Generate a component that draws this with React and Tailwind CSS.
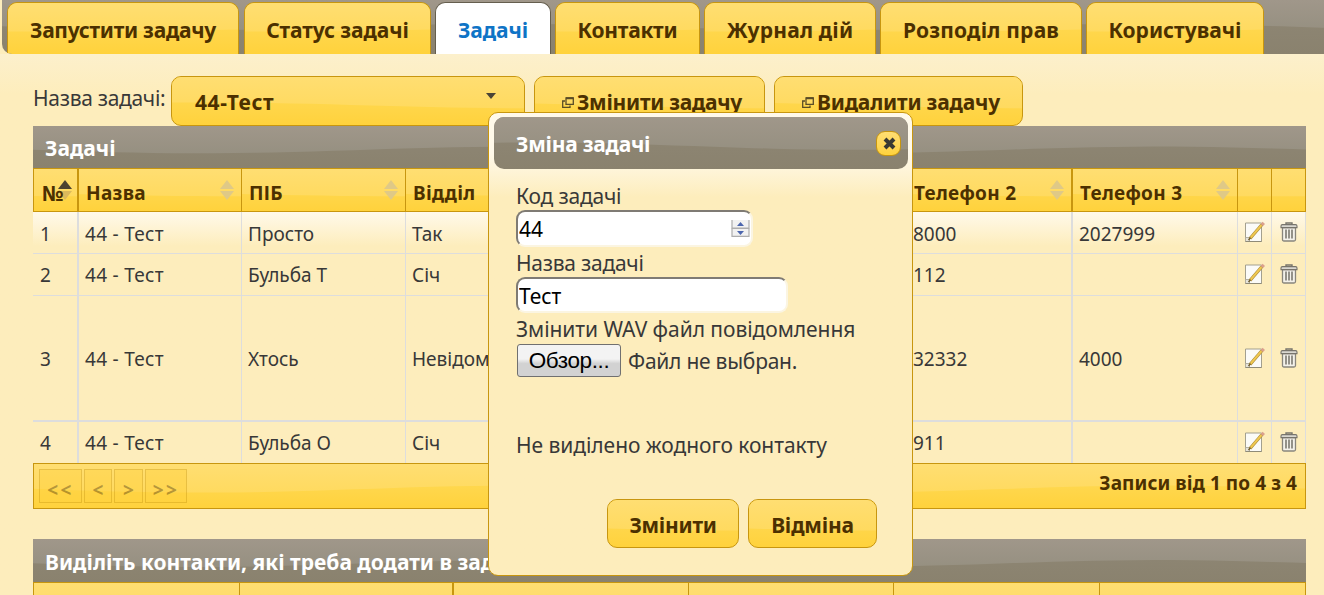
import { useState } from "react";
import clsx from "clsx";

const tabs = [
  { id: "run", label: "Запустити задачу", className: "w-[232px] tracking-[-0.28px]" },
  { id: "status", label: "Статус задачі", className: "w-[187px] tracking-[-0.1px]" },
  { id: "tasks", label: "Задачі", className: "w-[116px] tracking-[-0.1px]" },
  { id: "contacts", label: "Контакти", className: "w-[145px] tracking-[-0.25px]" },
  { id: "log", label: "Журнал дій", className: "w-[172px] tracking-[0.18px]" },
  { id: "rights", label: "Розподіл прав", className: "w-[202px] tracking-[0.19px]" },
  { id: "users", label: "Користувачі", className: "w-[178px]" },
];

const columns = [
  { label: "№", width: 45, sort: "asc", wide: true },
  { label: "Назва", width: 163, sort: "none" },
  { label: "ПІБ", width: 164, sort: "none" },
  { label: "Відділ", width: 164, sort: "none" },
  { label: "", width: 168, sort: "none" },
  { label: "", width: 169, sort: "none" },
  { label: "Телефон 2", width: 166, sort: "none", wide: true },
  { label: "Телефон 3", width: 165, sort: "none" },
  { label: "", width: 34 },
  { label: "", width: 34 },
];

const tasks = [
  { id: 1, task: "44 - Тест", name: "Просто", dept: "Так", phone2: "8000", phone3: "2027999", className: "h-[42px]", pad: "pt-[3px]" },
  { id: 2, task: "44 - Тест", name: "Бульба Т", dept: "Січ", phone2: "112", phone3: "", className: "h-[42px]", pad: "pt-px" },
  { id: 3, task: "44 - Тест", name: "Хтось", dept: "Невідомо", phone2: "32332", phone3: "4000", className: "h-[126px]", pad: "pt-[3px]" },
  { id: 4, task: "44 - Тест", name: "Бульба О", dept: "Січ", phone2: "911", phone3: "", className: "h-[41px]", pad: "pt-px" },
];

const GRID = "grid grid-cols-[45px_163px_164px_164px_168px_169px_166px_165px_34px_1fr]";

// glossy wave on top of the bar, level and amp are in percent of the bar height
function Gloss({ width, trough = 167, level = 55, amp = 8, tone = "gold" }) {
  const period = 640;
  const at = (x) => (level + amp * Math.cos(((x - trough) / period) * Math.PI * 2)).toFixed(2);
  let d = "M0 0";
  for (let x = 0; x < width; x += 20) {
    d += ` L${x} ${at(x)}`;
  }
  d += ` L${width} ${at(width)} L${width} 0Z`;
  return (
    <svg className="absolute inset-0 -z-10 h-full w-full" viewBox={`0 0 ${width} 100`} preserveAspectRatio="none">
      <defs>
        <linearGradient id="gloss-gold" x1="0" y1="0" x2="0" y2="1">
          <stop offset="0" stopColor="#ffde72" />
          <stop offset="1" stopColor="#ffda5f" />
        </linearGradient>
        <linearGradient id="gloss-gray" x1="0" y1="0" x2="0" y2="1">
          <stop offset="0" stopColor="#a0978a" />
          <stop offset="1" stopColor="#969081" />
        </linearGradient>
      </defs>
      <path d={d} fill={tone === "gold" ? "url(#gloss-gold)" : "url(#gloss-gray)"} />
    </svg>
  );
}

function Button({ children, width, className }) {
  return (
    <button
      type="button"
      className={clsx(
        "relative isolate flex shrink-0 items-center overflow-hidden rounded-[10px] border border-[#c8960f] bg-linear-to-b from-[#ffd74d] from-50% to-[#ffd23c] font-bold text-[#4c3000]",
        className
      )}
    >
      <Gloss width={width} trough={width} level={59} amp={6} />
      {children}
    </button>
  );
}

function SortIcon({ sort }) {
  return (
    <svg
      className={clsx("absolute top-[11px] h-[20px] w-[14px]", sort === "asc" ? "right-[5px] -z-[5]" : "right-[7px]")}
      viewBox="0 0 14 20"
    >
      <path d="M7 0 L14 9 H0Z" fill={sort === "asc" ? "#4d4330" : "#dfc987"} />
      <path d="M7 20 L14 11 H0Z" fill={sort === "asc" ? "#dcb95c" : "#dfc987"} />
    </svg>
  );
}

function WindowIcon() {
  return (
    <svg className="h-[11px] w-[12px] shrink-0" viewBox="0 0 12 11" fill="none" stroke="#5a4c26">
      <path d="M3 4 H0.7 V10.3 H8 V8.5" strokeWidth="1.3" />
      <path d="M4 1 H11.3 V7.3 H4Z" strokeWidth="1.3" />
      <path d="M4 1.2 H11.4" strokeWidth="2" />
    </svg>
  );
}

function EditIcon() {
  return (
    <svg className="h-[22px] w-[22px]" viewBox="0 0 22 22">
      <path d="M1.5 2 H17.5 V20.5 H5.5 L1.5 16.5Z" fill="#fbfbf8" stroke="#a3a08f" />
      <path d="M1.5 20.5 V16.5 H5.5 V20.5Z" fill="#e5e3da" stroke="#a3a08f" strokeWidth="0.8" />
      <path d="M1.5 20.5 H17.5" stroke="#8f8b78" />
      <path d="M6 17.5 L18 3.5" stroke="#a98a38" strokeWidth="3.2" />
      <path d="M6.5 16.8 L17.5 4" stroke="#f0c850" strokeWidth="2" />
      <path d="M17.8 4 L19.8 1.8" stroke="#dba08c" strokeWidth="3.2" />
      <path d="M4.5 19 L6.5 16.6" stroke="#6e5a2a" strokeWidth="1.4" />
    </svg>
  );
}

function TrashIcon() {
  return (
    <svg className="h-[20px] w-[18px]" viewBox="0 0 18 20" fill="none">
      <path d="M6 2.5 V1 H12 V2.5" stroke="#77746c" strokeWidth="1.4" />
      <path d="M2.5 5.5 H15.5 V17.5 Q15.5 19 14 19 H4 Q2.5 19 2.5 17.5Z" fill="#f3f1ea" stroke="#88857c" strokeWidth="1.3" />
      <path d="M1 4 Q1 2.6 2.5 2.6 H15.5 Q17 2.6 17 4 V5.6 H1Z" fill="#d9d7d0" stroke="#77746c" strokeWidth="1.1" />
      <path d="M6 7.5 V16.5 M9 7.5 V16.5 M12 7.5 V16.5" stroke="#74716a" strokeWidth="1.5" />
    </svg>
  );
}

function TitleBar({ children, className }) {
  return (
    <h2 className={clsx("relative isolate bg-linear-to-b from-[#8f8776] to-[#8a826e] pl-3 text-[21px] font-bold text-white", className)}>
      <Gloss width={1273} level={57} amp={8} tone="gray" />
      {children}
    </h2>
  );
}

function TaskTable() {
  return (
    <div>
      <TitleBar className="h-[42px] leading-[45px]">Задачі</TitleBar>
      <div className={clsx(GRID, "h-[44px] grid-rows-[42px] border-y border-l border-[#c8960f] text-[19px] font-bold tracking-[0.3px] text-[#4c3000]")}>
        {columns.map((col, i) => (
          <div
            key={i}
            className={clsx(
              "relative isolate h-[42px] border-[#c8960f] bg-linear-to-b from-[#ffd74d] from-50% to-[#ffd23c] pt-[5px] leading-[39px]",
              i === 0 ? "pl-2 text-[21px] tracking-normal" : "pl-[7px]",
              col.wide ? "border-r-2" : "border-r"
            )}
          >
            <Gloss width={col.width} trough={col.width} level={60} amp={5} />
            {col.label}
            {col.sort && <SortIcon sort={col.sort} />}
          </div>
        ))}
      </div>
      <div className="bg-linear-to-b from-[#fff9ea] to-[#fdedbc] to-[34px] text-[19px] text-[#383838]">
        {tasks.map((t) => {
          const cell = clsx("flex items-center border-r border-[#dddddd] pl-[6px]", t.pad);
          const iconCell = "flex items-center justify-center border-r border-[#dddddd]";
          return (
            <div
              key={t.id}
              className={clsx(GRID, "border-[#dddddd] pl-px", t.className, t.id === 3 && "border-b-2", t.id < 3 && "border-b")}
            >
              <span className={clsx(cell, "border-r-2")}>{t.id}</span>
              <span className={clsx(cell, "tracking-[0.3px]")}>{t.task}</span>
              <span className={cell}>{t.name}</span>
              <span className={cell}>{t.dept}</span>
              <span className={cell}></span>
              <span className={cell}></span>
              <span className={clsx(cell, "border-r-2")}>{t.phone2}</span>
              <span className={cell}>{t.phone3}</span>
              <span className={clsx(iconCell, "pb-px")}><EditIcon /></span>
              <span className={clsx(iconCell, "pb-px")}><TrashIcon /></span>
            </div>
          );
        })}
      </div>
      <div className="relative isolate flex h-[46px] items-start justify-between border border-[#c8960f] bg-linear-to-b from-[#ffd74d] from-50% to-[#ffd23c] pt-[5px] pr-2 pl-[5px] font-bold text-[#4c3000]">
        <Gloss width={1273} level={57} amp={8} />
        <div className="flex gap-[2px] opacity-40">
          <Pager className="w-[43px] tracking-[2.5px]">&lt;&lt;</Pager>
          <Pager className="w-[28px]">&lt;</Pager>
          <Pager className="w-[29px]">&gt;</Pager>
          <Pager className="w-[42px] tracking-[2.5px]">&gt;&gt;</Pager>
        </div>
        <span className="text-[19px] leading-[29px] tracking-[0.08px]">Записи від 1 по 4 з 4</span>
      </div>
    </div>
  );
}

function Pager({ children, className }) {
  return (
    <button type="button" disabled className={clsx("h-[34px] border border-[#c8960f] bg-[#ffd23c] pt-1 text-[19px] leading-[32px] font-bold", className)}>
      {children}
    </button>
  );
}

function ContactsTable() {
  const cell = "border-r border-[#c8960f] bg-linear-to-b from-[#ffde72] to-[#ffda5f]";
  return (
    <div className="mt-[30px]">
      <TitleBar className="h-[43px] leading-[47px]">Виділіть контакти, які треба додати в задачу</TitleBar>
      <div className="grid h-[44px] grid-cols-[206px_214px_235px_205px_206px_1fr] border-t border-l border-[#c8960f]">
        <div className={cell}></div>
        <div className={clsx(cell, "border-r-2")}></div>
        <div className={cell}></div>
        <div className={cell}></div>
        <div className={cell}></div>
        <div className={cell}></div>
      </div>
    </div>
  );
}

function EditDialog() {
  const [code, setCode] = useState("44");
  const [name, setName] = useState("Тест");
  const input = "rounded-[9px] border-2 border-t-[#7f7b74] border-l-[#7f7b74] border-r-[#fbf5e2] border-b-[#fbf5e2] bg-white px-px text-[21px] text-black outline-none";

  return (
    <div className="absolute top-[112px] left-[488px] flex h-[464px] w-[425px] flex-col rounded-[10px] border border-[#c8960f] bg-linear-to-b from-[#fff9ea] from-[40px] to-[#fdedbc] to-[84px] pt-1 pr-1 pl-[5px] text-[#383838]">
      <div className="relative isolate flex h-[52px] shrink-0 items-center justify-between overflow-hidden rounded-[10px] bg-linear-to-b from-[#8f8776] to-[#8a826e] pr-[7px] pl-[22px] text-[21px] font-bold text-white">
        <Gloss width={414} trough={360} level={56} amp={7} tone="gray" />
        <span className="pt-[3px] tracking-[-0.25px]">Зміна задачі</span>
        <button type="button" className="flex h-[25px] w-[25px] items-center justify-center rounded-[9px] border border-[#c8960f] bg-linear-to-b from-[#ffde72] to-[#ffd23c]">
          <svg className="ml-px h-[13px] w-[13px]" viewBox="0 0 13 13">
            <path d="M2 2 L11 11 M11 2 L2 11" stroke="#3a3a33" strokeWidth="4" />
          </svg>
        </button>
      </div>

      <form className="flex flex-col items-start pt-[13px] pl-[22px] text-[21px] leading-[29px]">
        <label htmlFor="code" className="h-[28px] tracking-[-0.2px]">Код задачі</label>
        <div className={clsx(input, "flex h-[37px] w-[237px] items-center")}>
          <input id="code" className="w-[212px] pt-px outline-none" value={code} onChange={(e) => setCode(e.target.value)} />
          <svg className="mb-px h-[17px] w-[19px]" viewBox="0 0 19 17">
            <path d="M1 0 V8 H18 V0" fill="#f1f1f1" stroke="#adadad" strokeWidth="1.2" />
            <path d="M1 8.5 V16.4 H18 V8.5Z" fill="#f1f1f1" stroke="#adadad" strokeWidth="1.2" />
            <path d="M9.5 2 L13 6 H6Z M9.5 15 L13 11 H6Z" fill="#4c66ae" />
          </svg>
        </div>
        <label htmlFor="name" className="mt-[2px] h-[28px] tracking-[-0.25px]">Назва задачі</label>
        <input id="name" className={clsx(input, "h-[36px] w-[272px] pt-[2px] tracking-[-0.1px]")} value={name} onChange={(e) => setName(e.target.value)} />
        <label className="mt-[2px] h-[29px] tracking-[-0.05px]">Змінити WAV файл повідомлення</label>
        <div className="flex items-center gap-[7px]">
          <button type="button" className="ml-px h-[33px] w-[104px] rounded-[3px] border border-[#707070] bg-linear-to-b from-[#f3f3f3] from-45% to-[#d2d2d2] to-60% font-['Liberation_Sans'] text-[22.5px] leading-[30px] tracking-[-0.4px] text-black">
            Обзор...
          </button>
          <span className="pt-[2px] tracking-[-0.25px]">Файл не выбран.</span>
        </div>
        <p className="mt-[54px] tracking-[-0.05px]">Не виділено жодного контакту</p>
      </form>

      <div className="mt-auto flex justify-end gap-[9px] pr-[31px] pb-[27px] text-[21px]">
        <Button width={132} className="h-[49px] w-[132px] justify-center pt-1 tracking-[-0.28px]">Змінити</Button>
        <Button width={129} className="h-[49px] w-[129px] justify-center pt-1 tracking-[-0.2px]">Відміна</Button>
      </div>
    </div>
  );
}

function App() {
  const [active, setActive] = useState("tasks");

  return (
    <div className="relative h-[595px] w-[1324px] overflow-hidden bg-[#fdedbc] font-['Noto_Sans',sans-serif] text-[#383838]">
      <nav className="relative isolate ml-[2px] flex h-[54px] items-end gap-1 overflow-hidden rounded-bl-[10px] bg-linear-to-b from-[#8f8776] to-[#8a826e] pl-[5px]">
        <Gloss width={1322} trough={180} level={50} amp={6} tone="gray" />
        {tabs.map((tab, i) => (
          <button
            key={tab.id}
            type="button"
            onClick={() => setActive(tab.id)}
            className={clsx(
              "relative isolate h-[52px] shrink-0 overflow-hidden rounded-t-[10px] border border-b-0 pt-1 text-[21px] font-bold",
              i === 0 && "mr-px",
              active === tab.id
                ? "border-[#655e4e] bg-white text-[#0f74c6]"
                : "border-[#c8960f] bg-linear-to-b from-[#ffd74d] from-50% to-[#ffd23c] text-[#4c3000]",
              tab.className
            )}
          >
            {active !== tab.id && <Gloss width={200} trough={40} level={52} amp={4} />}
            {tab.label}
          </button>
        ))}
      </nav>

      <main className="bg-linear-to-b from-[#fcf0cc] to-[#fdedbc] to-[40px] pr-[18px] pl-[33px]">
        <div className="flex h-[72px] items-start pt-[22px] text-[21px]">
          <span className="w-[138px] leading-[44px] tracking-[-0.3px]">Назва задачі:</span>
          <Button width={354} className="mr-[9px] h-[50px] w-[354px] justify-between pt-[3px] pr-[28px] pl-[23px] tracking-[0.6px]">
            44-Тест
            <svg className="mb-[14px] h-[6px] w-[10px]" viewBox="0 0 10 6">
              <path d="M0 0 H10 L5 6Z" fill="#4a4436" />
            </svg>
          </Button>
          <Button width={231} className="mr-[9px] h-[50px] w-[231px] justify-center gap-[3px] pt-[3px] pl-[5px] tracking-[-0.3px]">
            <WindowIcon />
            Змінити задачу
          </Button>
          <Button width={249} className="h-[50px] w-[249px] justify-center gap-[3px] pt-[3px] pl-[5px] tracking-[-0.2px]">
            <WindowIcon />
            Видалити задачу
          </Button>
        </div>
        <TaskTable />
        <ContactsTable />
      </main>

      <EditDialog />
    </div>
  );
}

export default App;
